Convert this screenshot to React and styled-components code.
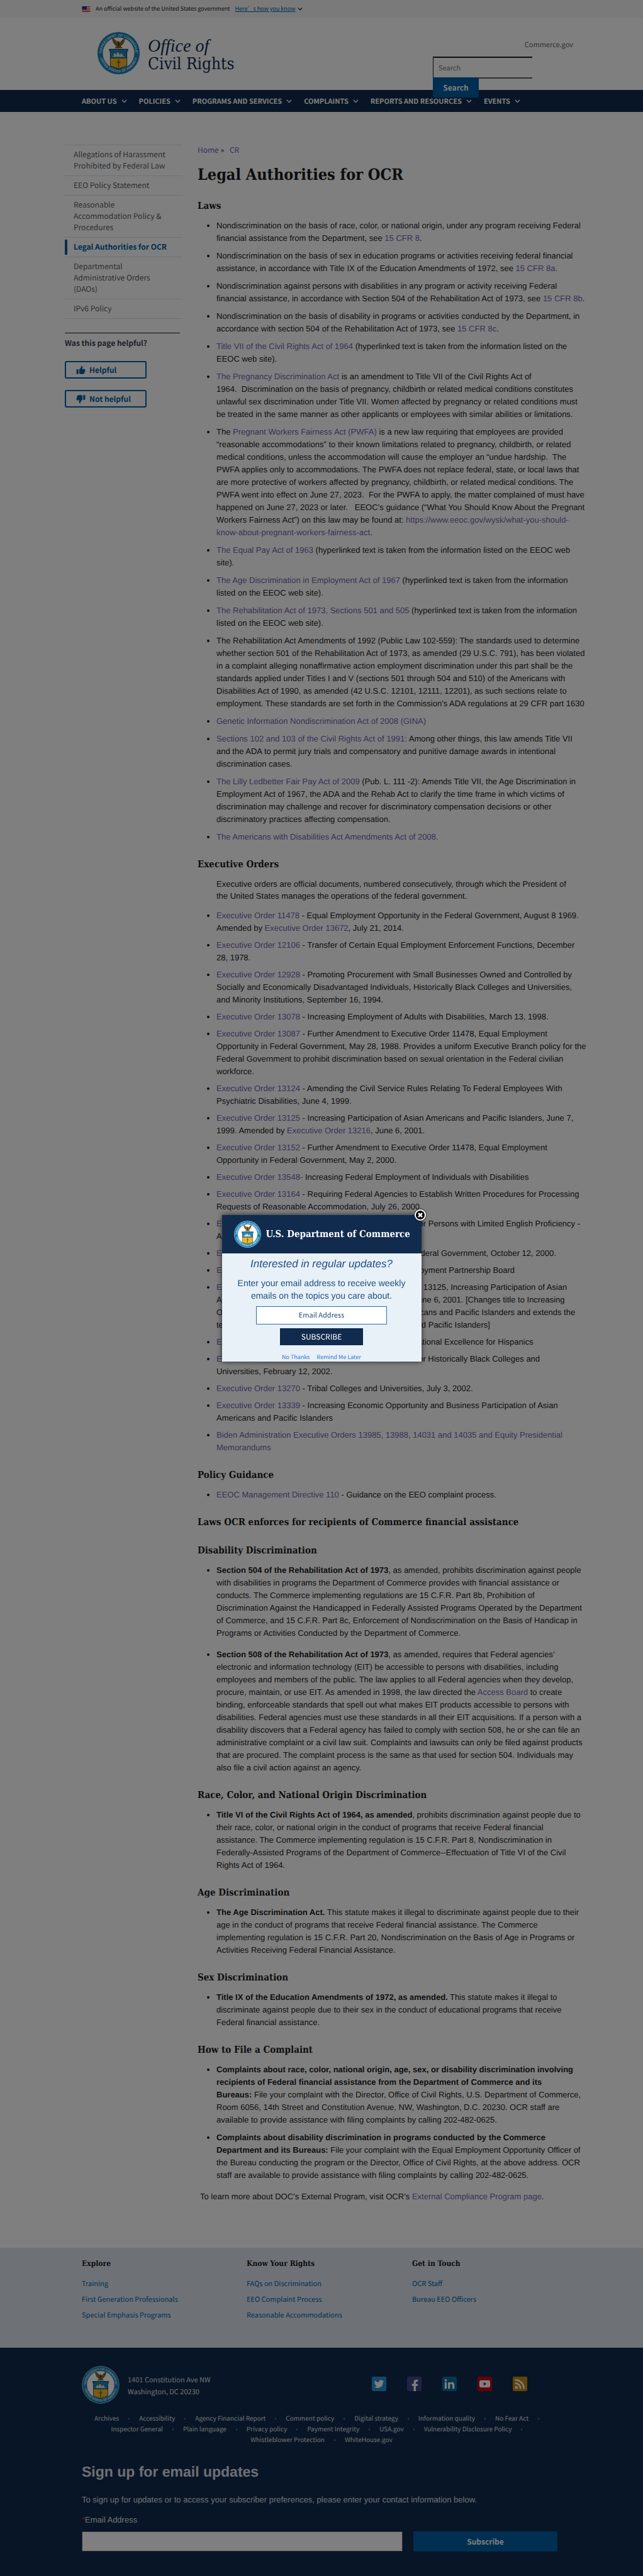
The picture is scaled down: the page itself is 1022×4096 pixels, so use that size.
import React from "react";
import styled, { createGlobalStyle, css } from "styled-components";

const sans = `"Noto Sans CJK SC", "Noto Sans", sans-serif`;
const serif = `"DejaVu Serif Condensed", "DejaVu Serif", serif`;
const body = `"Liberation Sans", Arial, sans-serif`;

const Global = createGlobalStyle`
  *, *::before, *::after { box-sizing: border-box; }
  body {
    margin: 0;
    background: #fff;
    color: #1b1b1b;
    font: 13px/20px ${body};
    text-rendering: geometricPrecision;
  }
  a { color: #7562ae; text-decoration: none; }
  button, input { font-family: ${sans}; margin: 0; text-rendering: inherit; }
`;

const wrap = css`
  width: 100%;
  max-width: 762px;
  margin: 0 auto;
`;

/* ---------- banner ---------- */
const Banner = styled.div`
  background: #f5f5f5;
`;
const BannerInner = styled.div`
  ${wrap}
  height: 28px;
  display: flex;
  align-items: center;
  font: 9px/14px ${sans};
  svg { display: block; }
`;
const Flag = styled.svg`
  width: 14px;
  height: 9px;
  margin-right: 8px;
`;
const KnowLink = styled.a`
  display: flex;
  align-items: center;
  gap: 4px;
  margin-left: 8px;
  color: #005ea2;
  span { text-decoration: underline; }
  svg { color: #1b1b1b; }
`;

/* ---------- header ---------- */
const Header = styled.header`
  max-width: 822px;
  height: 115px;
  margin: 0 auto;
  padding: 0 11px 0 54px;
  display: flex;
  justify-content: space-between;
  align-items: flex-start;
`;
const Brand = styled.a`
  display: flex;
  gap: 12px;
  margin-top: 22px;
  color: #112b4e;
`;
const BrandName = styled.span`
  display: block;
  padding-top: 9px;
  font: 26px/29px ${serif};
  em { display: block; font: italic 28px/29px "Liberation Serif", serif; }
`;
const HeaderTools = styled.div`
  width: 223px;
  padding-top: 34px;
`;
const SiteLink = styled.a`
  display: block;
  text-align: right;
  font: 11px/18px ${sans};
  color: #5b616b;
`;
const SearchForm = styled.form`
  width: 158px;
  margin-top: 10px;
`;
const SearchInput = styled.input`
  display: block;
  width: 100%;
  height: 35px;
  padding: 0 8px;
  border: solid #1b1b1b;
  border-width: 2px 0 2px 1px;
  border-bottom-color: #565c65;
  border-radius: 0;
  background: #fff;
  font-size: 11px;
  &::placeholder { color: #757575; opacity: 1; }
`;
const SearchButton = styled.button`
  position: relative;
  z-index: 1;
  width: 73px;
  height: 32px;
  margin-top: -2px;
  border: 0;
  border-radius: 0 3px 3px 3px;
  background: #005ea2;
  color: #fff;
  font-size: 12px;
  font-weight: 700;
`;

/* ---------- navigation ---------- */
const NavBar = styled.nav`
  background: #112b4e;
`;
const NavList = styled.ul`
  ${wrap}
  height: 35px;
  padding: 0;
  list-style: none;
  display: flex;
  align-items: center;
  gap: 19px;
`;
const NavButton = styled.button`
  display: flex;
  align-items: center;
  gap: 7px;
  padding: 0;
  border: 0;
  background: none;
  color: #fff;
  font-size: 11px;
  font-weight: 700;
  line-height: 18px;
  text-transform: uppercase;
  white-space: nowrap;
`;

/* ---------- page columns ---------- */
const Columns = styled.div`
  max-width: 842px;
  margin: 0 auto;
  padding: 52px 0 71px 13px;
  display: grid;
  grid-template-columns: 187px minmax(0, 1fr);
  gap: 24px;
`;
const SideList = styled.ul`
  margin: 0;
  padding: 0;
  list-style: none;
  border-bottom: 1px solid #dfe1e2;
`;
const SideItem = styled.li`
  border-top: 1px solid #dfe1e2;
  padding: 3px 0;
`;
const SideLink = styled.a`
  display: block;
  padding: 3px 16px 3px 10px;
  border-left: 4px solid ${(p) => (p.$active ? "#005ea2" : "transparent")};
  color: ${(p) => (p.$active ? "#005ea2" : "#565c65")};
  font: ${(p) => (p.$active ? 700 : 400)} 12px/18px ${sans};
`;
const Feedback = styled.section`
  width: 183px;
  margin-top: 22px;
  border-top: 1px solid #1b1b1b;
  padding-top: 6px;
  display: flex;
  flex-direction: column;
  align-items: flex-start;
`;
const FeedbackTitle = styled.h2`
  margin: 0 0 19px;
  font: 700 12px/19px ${sans};
  color: #3d4551;
`;
const FeedbackButton = styled.button`
  width: 130px;
  height: 28px;
  margin-bottom: 18px;
  padding: 0 16px;
  display: flex;
  align-items: center;
  gap: 6px;
  border: 2px solid #005ea2;
  border-radius: 3px;
  background: none;
  color: #005ea2;
  font-size: 12px;
  font-weight: 700;
  white-space: nowrap;
`;

/* ---------- article ---------- */
const Crumbs = styled.nav`
  font: 12px/18px ${sans};
  a:last-child { margin-left: 6px; }
`;
const Title = styled.h1`
  margin: 14px 0 18px;
  font: 700 25px/32px ${serif};
`;
const Heading = styled.h2`
  margin: 21px 0 10px;
  font: 700 15px/24px ${serif};
`;
const List = styled.ul`
  margin: 0;
  padding: 0 0 0 30px;
  > li { margin-bottom: ${(p) => (p.$tight ? 7 : 8)}px; }
`;
const Item = styled.li`
  && { ${(p) => p.$wide && "margin-bottom: 14px;"} }
`;
const Lead = styled.p`
  margin: 0 30px 12px 30px;
  line-height: 19px;
`;
const Closing = styled.p`
  margin: 14px 0 0 4px;
`;

/* ---------- footers ---------- */
const LinksFooter = styled.div`
  background: #dce4ef;
`;
const LinkColumns = styled.div`
  ${wrap}
  height: 159px;
  padding-top: 15px;
  display: grid;
  grid-template-columns: 262px 263px 1fr;
`;
const FooterHeading = styled.h3`
  margin: 0 0 10px;
  font: 700 12px/20px ${serif};
`;
const FooterList = styled.ul`
  margin: 0;
  padding: 0;
  list-style: none;
  font: 11px/25px ${sans};
  a { color: #005ea2; }
`;
const Footer = styled.footer`
  background: #112b4e;
  color: #fff;
  padding: 29px 0 41px;
`;
const FooterInner = styled.div`
  ${wrap}
`;
const AddressRow = styled.div`
  display: flex;
  align-items: center;
  justify-content: space-between;
`;
const Contact = styled.div`
  display: flex;
  align-items: center;
  gap: 13px;
`;
const Address = styled.address`
  font: 11px/19px ${sans};
  color: #dfe1e2;
  padding-top: 3px;
`;
const Social = styled.div`
  display: flex;
  gap: 33px;
  margin: 0 54px 4px 0;
  svg { display: block; }
`;
const LegalLinks = styled.ul`
  list-style: none;
  margin: 14px 0 0;
  padding: 0;
  display: flex;
  flex-wrap: wrap;
  justify-content: center;
  font: 10px/17px ${sans};
  li { display: flex; align-items: center; }
  a { color: #dfe1e2; }
  li:not(:last-child)::after {
    content: "";
    width: 2px;
    height: 2px;
    margin: 2px 15px 0;
    border-radius: 50%;
    background: #8aa0bd;
  }
`;
const SignupTitle = styled.h2`
  margin: 29px 0 21px;
  font: 700 23px/28px ${body};
  color: #dfe1e2;
`;
const SignupText = styled.p`
  margin: 0 0 12px;
  color: #dfe1e2;
`;
const SignupLabel = styled.label`
  display: block;
  margin-bottom: 8px;
  color: #dfe1e2;
  span { color: #e31c3d; }
`;
const SignupRow = styled.div`
  display: grid;
  grid-template-columns: minmax(0, 510px) 229px;
  gap: 17px;
`;
const SignupInput = styled.input`
  height: 32px;
  border: 1px solid #565c65;
  background: #fff;
`;
const SignupButton = styled.button`
  height: 32px;
  border: 0;
  border-radius: 2px;
  background: #005ea2;
  color: #fff;
  font-size: 12px;
  font-weight: 700;
`;

/* ---------- subscription dialog ---------- */
const Overlay = styled.div`
  position: fixed;
  inset: 0;
  z-index: 10;
  display: flex;
  align-items: center;
  justify-content: center;
  background: rgba(0, 0, 0, 0.5);
`;
const Dialog = styled.section`
  position: relative;
  width: 317px;
  height: 233px;
  background: #e8f0f8;
  box-shadow: 0 0 8px rgba(0, 0, 0, 0.7);
  color: #205081;
`;
const DialogHead = styled.header`
  height: 61px;
  padding-left: 19px;
  display: flex;
  align-items: center;
  gap: 8px;
  background: #112b4e;
  color: #fff;
  font: 700 15px/24px ${serif};
  white-space: nowrap;
`;
const DialogBody = styled.form`
  height: 172px;
  padding-top: 6px;
  display: flex;
  flex-direction: column;
  align-items: center;
  text-align: center;
`;
const DialogTitle = styled.h2`
  margin: 0 0 9px;
  font: italic 400 17px/22px ${body};
`;
const DialogText = styled.p`
  width: 270px;
  margin: 0 0 7px;
  font-size: 14px;
`;
const DialogInput = styled.input`
  width: 208px;
  height: 29px;
  flex: none;
  border: 1px solid #2672b5;
  background: #fff;
  text-align: center;
  font-size: 11px;
  &::placeholder { color: #1a4778; opacity: 1; }
`;
const DialogSubmit = styled.button`
  width: 132px;
  height: 27px;
  flex: none;
  margin: 6px 0 12px;
  border: 0;
  background: #112b4e;
  color: #fff;
  font-size: 12px;
`;
const DialogLinks = styled.div`
  display: flex;
  gap: 11px;
  font: 9px/14px ${sans};
  a { color: #2a76c0; }
`;
const Close = styled.button`
  position: absolute;
  top: -9px;
  right: -7px;
  width: 18px;
  height: 18px;
  padding: 0;
  display: flex;
  align-items: center;
  justify-content: center;
  border: 2px solid #fff;
  border-radius: 50%;
  background: #000;
  color: #fff;
  box-shadow: 0 0 3px #000;
`;

/* ---------- drawings ---------- */
const Chevron = ({ size = 9 }) => (
  <svg width={size} height={size} viewBox="0 0 10 10" fill="none" stroke="currentColor" strokeWidth="1.5" aria-hidden="true">
    <path d="M1 3l4 4.4L9 3" />
  </svg>
);

const Seal = ({ size, id }) => (
  <svg width={size} height={size} viewBox="0 0 100 100" role="img" aria-label="Department of Commerce seal">
    <defs>
      <path id={`${id}-top`} d="M11.5 50a38.5 38.5 0 0 1 77 0" />
      <path id={`${id}-bottom`} d="M6 50a44 44 0 0 0 88 0" />
    </defs>
    <circle cx="50" cy="50" r="49.5" fill="#cfe6f2" />
    <circle cx="50" cy="50" r="48.5" fill="#1a80b4" />
    <circle cx="50" cy="50" r="37" fill="#fff" stroke="#124f78" strokeWidth="1" />
    <g fill="#d6ecf7" fontFamily="Liberation Sans, sans-serif" fontSize="8" fontWeight="700">
      <text textAnchor="middle"><textPath href={`#${id}-top`} startOffset="50%">DEPARTMENT OF COMMERCE</textPath></text>
      <text textAnchor="middle"><textPath href={`#${id}-bottom`} startOffset="50%">UNITED STATES OF AMERICA</textPath></text>
      <circle cx="6.500" cy="50" r="1.200" />
      <circle cx="93.500" cy="50" r="1.200" />
    </g>
    <path d="M36 16c0 7 4 15 10 18l-4 4h16l-4-4c6-3 10-11 10-18-5 3-9 7-11 12 0-4-2-6-4-5-1-1-3 1-2 3-2-4-6-8-11-10z" fill="#8a6a1f" stroke="#4a3610" strokeWidth="1" />
    <path d="M49 24l3 6-2 6-2-6z" fill="#3d2c0c" />
    <path d="M29 41h42v4h-2v34c0 3-14 4-19 9-5-5-19-6-19-9V45h-2z" fill="#1b86b8" stroke="#12324a" strokeWidth="1.500" />
    <path d="M31.500 61h37v17c-2 3-13 4-18.500 8-5.500-4-16.500-5-18.500-8z" fill="#f2b722" />
    <path d="M31 61h38" stroke="#12324a" strokeWidth="1.500" />
    <path d="M38 58c-1-5 1-8 5-9l1 5 2-7c5 1 7 4 7 8l2-6c4 2 6 5 6 9z" fill="#dfe9ee" stroke="#26485c" strokeWidth=".8" />
    <path d="M36 58h28" stroke="#e8f1f5" strokeWidth="1.500" />
    <path d="M49 64h2v20h-2zM46 70h8v2h-8z" fill="#6b5210" />
  </svg>
);

const UsFlag = () => (
  <Flag viewBox="0 0 16 11" aria-hidden="true">
    <path fill="#fff" d="M0 0h16v11H0z" />
    <path fill="#db3e1f" d="M0 0h16v1.500H0zM0 3h16v1.500H0zM0 6h16v1.500H0zM0 9h16v2H0z" />
    <path fill="#1e33b1" d="M0 0h9v6H0z" />
  </Flag>
);

const ThumbUp = ({ flip }) => (
  <svg width="15" height="15" viewBox="0 0 24 24" fill="currentColor" aria-hidden="true">
    <path
      transform={flip ? "rotate(180 12 12)" : undefined}
      d="M1 10h5v12H1zM8 10c3-2 5-5 5-9 3 0 4 2 3.500 4.500L15.500 9H21c2 0 2.500 2 1.500 3 1 1 .8 2.500-.5 3 .8 1 .5 2.500-.7 3 .5 1.500-.3 2.500-1.300 2.500C20 22 19 22 18 22h-5c-2 0-3-1-5-1z"
    />
  </svg>
);

const socials = [
  ["Twitter", "#2a8fd0", <path fill="#fff" d="M20 7.300c-.6.300-1.200.4-1.900.5.700-.4 1.200-1 1.400-1.800-.6.400-1.300.6-2.100.8A3.300 3.300 0 0 0 11.700 9.800 9.400 9.400 0 0 1 5 6.300c-.9 1.500-.4 3.400 1 4.400-.5 0-1-.2-1.500-.4 0 1.600 1.100 2.900 2.600 3.200-.5.100-1 .1-1.500 0 .4 1.300 1.600 2.300 3.100 2.300A6.600 6.600 0 0 1 4 17.200 9.300 9.300 0 0 0 18.400 9c.6-.5 1.200-1 1.600-1.700z" />],
  ["Facebook", "#3c4a86", <path fill="#fff" d="M16.500 24v-8.500h3l.5-3.400h-3.500V10c0-1 .4-1.700 1.800-1.700H20V5.200C19.600 5.100 18.600 5 17.500 5 14.800 5 13 6.600 13 9.500v2.600h-3v3.400h3V24z" transform="translate(-2 0)" />],
  ["LinkedIn", "#0e6a98", <path fill="#fff" d="M4 9.500h3.300V20H4zM5.700 4.300a1.900 1.900 0 1 1 0 3.800 1.900 1.900 0 0 1 0-3.800zM9.500 9.500h3.100V11c.5-.9 1.600-1.800 3.300-1.800 3.400 0 4.100 2.200 4.100 5.100V20h-3.300v-5.100c0-1.200 0-2.800-1.700-2.800s-2.100 1.300-2.100 2.700V20H9.500z" />],
  ["YouTube", "#c4060f", <path fill="#fff" fillRule="evenodd" d="M6 6h12c2.500 0 3 1.500 3 6s-.5 6-3 6H6c-2.500 0-3-1.500-3-6s.5-6 3-6zm4 3v6l5-3z" />],
  ["RSS", "#c48610", <g fill="none" stroke="#fff" strokeWidth="2.600"><path d="M4 5.500A14.500 14.500 0 0 1 18.500 20M4 11a9 9 0 0 1 9 9" /><circle cx="6" cy="18" r="1" /></g>],
];

/* ---------- content ---------- */
const A = ({ children }) => <a href="#link">{children}</a>;
const EO = ({ n }) => <A>Executive Order {n}</A>;
const nb = "\u00a0";

const navItems = ["About Us", "Policies", "Programs and Services", "Complaints", "Reports and Resources", "Events"];
const sideItems = [
  "Allegations of Harassment Prohibited by Federal Law",
  "EEO Policy Statement",
  "Reasonable Accommodation Policy & Procedures",
  "Legal Authorities for OCR",
  "Departmental Administrative Orders (DAOs)",
  "IPv6 Policy",
];
const footerColumns = [
  ["Explore", ["Training", "First Generation Professionals", "Special Emphasis Programs"]],
  ["Know Your Rights", ["FAQs on Discrimination", "EEO Complaint Process", "Reasonable Accommodations"]],
  ["Get in Touch", ["OCR Staff", "Bureau EEO Officers"]],
];
const legal = [
  "Archives", "Accessibility", "Agency Financial Report", "Comment policy", "Digital strategy", "Information quality",
  "No Fear Act", "Inspector General", "Plain language", "Privacy policy", "Payment Integrity", "USA.gov",
  "Vulnerability Disclosure Policy", "Whistleblower Protection", "WhiteHouse.gov",
];

const Article = () => (
  <main>
    <Crumbs aria-label="Breadcrumb"><A>Home</A> » <A>CR</A></Crumbs>
    <Title>Legal Authorities for OCR</Title>

    <Heading>Laws</Heading>
    <List>
      <Item>Nondiscrimination on the basis of race, color, or national origin, under any program receiving Federal financial assistance from the Department, see <A>15 CFR 8</A>.</Item>
      <Item>Nondiscrimination on the basis of sex in education programs or activities receiving federal financial assistance, in accordance with Title IX of the Education Amendments of 1972, see <A>15 CFR 8a.</A></Item>
      <Item>Nondiscrimination against persons with disabilities in any program or activity receiving Federal financial assistance, in accordance with Section 504 of the Rehabilitation Act of 1973, see <A>15 CFR 8b</A>.</Item>
      <Item>Nondiscrimination on the basis of disability in programs or activities conducted by the Department, in accordance with section 504 of the Rehabilitation Act of 1973, see <A>15 CFR 8c</A>.</Item>
      <Item><A>Title VII of the Civil Rights Act of 1964</A> (hyperlinked text is taken from the information listed on the EEOC web site).</Item>
      <Item><A>The Pregnancy Discrimination Act</A> is an amendment to Title VII of the Civil Rights Act of 1964.{nb}{nb}Discrimination on the basis of pregnancy, childbirth or related medical conditions constitutes unlawful sex discrimination under Title VII. Women affected by pregnancy or related conditions must be treated in the same manner as other applicants or employees with similar abilities or limitations.</Item>
      <Item>The <A>Pregnant Workers Fairness Act (PWFA)</A> is a new law requiring that employees are provided “reasonable accommodations” to their known limitations related to pregnancy, childbirth, or related medical conditions, unless the accommodation will cause the employer an “undue hardship.{nb} The PWFA applies only to accommodations. The PWFA does not replace federal, state, or local laws that are more protective of workers affected by pregnancy, childbirth, or related medical conditions. The PWFA went into effect on June 27, 2023.{nb} For the PWFA to apply, the matter complained of must have happened on June 27, 2023 or later.{nb}{nb} EEOC’s guidance (“What You Should Know About the Pregnant Workers Fairness Act”) on this law may be found at: <A>https://www.eeoc.gov/wysk/what-you-should-know-about-pregnant-workers-fairness-act</A>.</Item>
      <Item><A>The Equal Pay Act of 1963</A> (hyperlinked text is taken from the information listed on the EEOC web site).</Item>
      <Item><A>The Age Discrimination in Employment Act of 1967</A> (hyperlinked text is taken from the information listed on the EEOC web site).</Item>
      <Item><A>The Rehabilitation Act of 1973, Sections 501 and 505</A> (hyperlinked text is taken from the information listed on the EEOC web site).</Item>
      <Item>The Rehabilitation Act Amendments of 1992 (Public Law 102-559): The standards used to determine whether section 501 of the Rehabilitation Act of 1973, as amended (29 U.S.C. 791), has been violated in a complaint alleging nonaffirmative action employment discrimination under this part shall be the standards applied under Titles I and V (sections 501 through 504 and 510) of the Americans with Disabilities Act of 1990, as amended (42 U.S.C. 12101, 12111, 12201), as such sections relate to employment. These standards are set forth in the Commission's ADA regulations at 29 CFR part 1630</Item>
      <Item><A>Genetic Information Nondiscrimination Act of 2008 (GINA)</A></Item>
      <Item><A>Sections 102 and 103 of the Civil Rights Act of 1991:</A> Among other things, this law amends Title VII and the ADA to permit jury trials and compensatory and punitive damage awards in intentional discrimination cases.</Item>
      <Item><A>The Lilly Ledbetter Fair Pay Act of 2009</A> (Pub. L. 111 -2): Amends Title VII, the Age Discrimination in Employment Act of 1967, the ADA and the Rehab Act to clarify the time frame in which victims of discrimination may challenge and recover for discriminatory compensation decisions or other discriminatory practices affecting compensation.</Item>
      <Item><A>The Americans with Disabilities Act Amendments Act of 2008.</A></Item>
    </List>

    <Heading>Executive Orders</Heading>
    <Lead>Executive orders are official documents, numbered consecutively, through which the President of the United States manages the operations of the federal government.</Lead>
    <List $tight>
      <Item><EO n="11478" /> - Equal Employment Opportunity in the Federal Government, August 8 1969. Amended by <EO n="13672" />, July 21, 2014.</Item>
      <Item><EO n="12106" /> - Transfer of Certain Equal Employment Enforcement Functions, December 28, 1978.</Item>
      <Item><EO n="12928" /> - Promoting Procurement with Small Businesses Owned and Controlled by Socially and Economically Disadvantaged Individuals, Historically Black Colleges and Universities, and Minority Institutions, September 16, 1994.</Item>
      <Item><EO n="13078" /> - Increasing Employment of Adults with Disabilities, March 13, 1998.</Item>
      <Item><EO n="13087" /> - Further Amendment to Executive Order 11478, Equal Employment Opportunity in Federal Government, May 28, 1988. Provides a uniform Executive Branch policy for the Federal Government to prohibit discrimination based on sexual orientation in the Federal civilian workforce.</Item>
      <Item><EO n="13124" /> - Amending the Civil Service Rules Relating To Federal Employees With Psychiatric Disabilities, June 4, 1999.</Item>
      <Item><EO n="13125" /> - Increasing Participation of Asian Americans and Pacific Islanders, June 7, 1999. Amended by <EO n="13216" />, June 6, 2001.</Item>
      <Item><EO n="13152" /> - Further Amendment to Executive Order 11478, Equal Employment Opportunity in Federal Government, May 2, 2000.</Item>
      <Item><A>Executive Order 13548-</A> Increasing Federal Employment of Individuals with Disabilities</Item>
      <Item><EO n="13164" /> - Requiring Federal Agencies to Establish Written Procedures for Processing Requests of Reasonable Accommodation, July 26, 2000.</Item>
      <Item><EO n="13166" /> - Improving Access to Services for Persons with Limited English Proficiency - August 11, 2000.</Item>
      <Item><EO n="13171" /> - Hispanic Employment in the Federal Government, October 12, 2000.</Item>
      <Item><EO n="13187" /> - The President's Disability Employment Partnership Board</Item>
      <Item><EO n="13216" /> - Amendment to Executive Order 13125, Increasing Participation of Asian Americans and Pacific Islanders in Federal Programs, June 6, 2001. [Changes title to Increasing Opportunity and Improving Quality of Life of Asian Americans and Pacific Islanders and extends the term of the Advisory Commission on Asian Americans and Pacific Islanders]</Item>
      <Item><EO n="13230" /> - Advisory Commission on Educational Excellence for Hispanics</Item>
      <Item><EO n="13256" /> - President's Board of Advisors for Historically Black Colleges and Universities,{nb}February 12, 2002.</Item>
      <Item><EO n="13270" /> - Tribal Colleges and Universities, July 3, 2002.</Item>
      <Item><EO n="13339" /> - Increasing Economic Opportunity and Business Participation of Asian Americans and Pacific Islanders</Item>
      <Item><A>Biden Administration Executive Orders 13985, 13988, 14031 and 14035 and Equity Presidential Memorandums</A></Item>
    </List>

    <Heading>Policy Guidance</Heading>
    <List>
      <Item><A>EEOC Management Directive 110</A> - Guidance on the EEO complaint process.</Item>
    </List>

    <Heading>Laws OCR enforces for recipients of Commerce financial assistance</Heading>
    <Heading>Disability Discrimination</Heading>
    <List>
      <Item $wide><b>Section 504 of the Rehabilitation Act of 1973</b>, as amended, prohibits discrimination against people with disabilities in programs the Department of Commerce provides with financial assistance or conducts. The Commerce implementing regulations are 15 C.F.R. Part 8b, Prohibition of Discrimination Against the Handicapped in Federally Assisted Programs Operated by the Department of Commerce, and 15 C.F.R. Part 8c, Enforcement of Nondiscrimination on the Basis of Handicap in Programs or Activities Conducted by the Department of Commerce.</Item>
      <Item><b>Section 508 of the Rehabilitation Act of 1973</b>, as amended, requires that Federal agencies’ electronic and information technology (EIT) be accessible to persons with disabilities, including employees and members of the public. The law applies to all Federal agencies when they develop, procure, maintain, or use EIT. As amended in 1998, the law directed the <A>Access Board</A> to create binding, enforceable standards that spell out what makes EIT products accessible to persons with disabilities. Federal agencies must use these standards in all their EIT acquisitions. If a person with a disability discovers that a Federal agency has failed to comply with section 508, he or she can file an administrative complaint or a civil law suit. Complaints and lawsuits can only be filed against products that are procured. The complaint process is the same as that used for section 504. Individuals may also file a civil action against an agency.</Item>
    </List>

    <Heading>Race, Color, and National Origin Discrimination</Heading>
    <List>
      <Item><b>Title VI of the Civil Rights Act of 1964, as amended</b>, prohibits discrimination against people due to their race, color, or national origin in the conduct of programs that receive Federal financial assistance. The Commerce implementing regulation is 15 C.F.R. Part 8, Nondiscrimination in Federally-Assisted Programs of the Department of Commerce--Effectuation of Title VI of the Civil Rights Act of 1964.</Item>
    </List>

    <Heading>Age Discrimination</Heading>
    <List>
      <Item><b>The Age Discrimination Act.</b> This statute makes it illegal to discriminate against people due to their age in the conduct of programs that receive Federal financial assistance. The Commerce implementing regulation is 15 C.F.R. Part 20, Nondiscrimination on the Basis of Age in Programs or Activities Receiving Federal Financial Assistance.</Item>
    </List>

    <Heading>Sex Discrimination</Heading>
    <List>
      <Item><b>Title IX of the Education Amendments of 1972, as amended.</b> This statute makes it illegal to discriminate against people due to their sex in the conduct of educational programs that receive Federal financial assistance.</Item>
    </List>

    <Heading>How to File a Complaint</Heading>
    <List>
      <Item><b>Complaints about race, color, national origin, age, sex, or disability discrimination involving recipients of Federal financial assistance from the Department of Commerce and its Bureaus:</b>{nb}File your complaint with the Director, Office of Civil Rights, U.S. Department of Commerce, Room 6056, 14th Street and Constitution Avenue, NW, Washington, D.C. 20230. OCR staff are available to provide assistance with filing complaints by calling 202-482-0625.</Item>
      <Item><b>Complaints about disability discrimination in programs conducted by the Commerce Department and its Bureaus:</b> File your complaint with the Equal Employment Opportunity Officer of the Bureau conducting the program or the Director, Office of Civil Rights, at the above address. OCR staff are available to provide assistance with filing complaints by calling 202-482-0625.</Item>
    </List>
    <Closing>To learn more about DOC’s External Program, visit OCR’s <A>External Compliance Program page</A>.</Closing>
  </main>
);

export default function App() {
  return (
    <>
      <Global />
      <Banner>
        <BannerInner>
          <UsFlag />
          An official website of the United States government
          <KnowLink href="#know"><span>Here’s how you know</span><Chevron size={8} /></KnowLink>
        </BannerInner>
      </Banner>
      <Header>
        <Brand href="#home">
          <Seal size={69} id="seal-header" />
          <BrandName><em>Office of</em>Civil Rights</BrandName>
        </Brand>
        <HeaderTools>
          <SiteLink href="#commerce">Commerce.gov</SiteLink>
          <SearchForm role="search">
            <SearchInput type="search" placeholder="Search" aria-label="Search" />
            <SearchButton type="button">Search</SearchButton>
          </SearchForm>
        </HeaderTools>
      </Header>
      <NavBar aria-label="Primary">
        <NavList>
          {navItems.map((t) => (
            <li key={t}><NavButton type="button">{t}<Chevron /></NavButton></li>
          ))}
        </NavList>
      </NavBar>
      <Columns>
        <aside>
          <SideList>
            {sideItems.map((t, i) => (
              <SideItem key={t}><SideLink href="#side" $active={i === 3}>{t}</SideLink></SideItem>
            ))}
          </SideList>
          <Feedback>
            <FeedbackTitle>Was this page helpful?</FeedbackTitle>
            <FeedbackButton type="button"><ThumbUp />Helpful</FeedbackButton>
            <FeedbackButton type="button"><ThumbUp flip />Not helpful</FeedbackButton>
          </Feedback>
        </aside>
        <Article />
      </Columns>
      <LinksFooter>
        <LinkColumns>
          {footerColumns.map(([title, links]) => (
            <div key={title}>
              <FooterHeading>{title}</FooterHeading>
              <FooterList>{links.map((l) => <li key={l}><A>{l}</A></li>)}</FooterList>
            </div>
          ))}
        </LinkColumns>
      </LinksFooter>
      <Footer>
        <FooterInner>
          <AddressRow>
            <Contact>
              <Seal size={60} id="seal-footer" />
              <Address>1401 Constitution Ave NW<br />Washington, DC 20230</Address>
            </Contact>
            <Social>
              {socials.map(([name, color, glyph]) => (
                <a key={name} href="#social" aria-label={name}>
                  <svg width="23" height="23" viewBox="0 0 24 24"><rect width="24" height="24" rx="2" fill={color} />{glyph}</svg>
                </a>
              ))}
            </Social>
          </AddressRow>
          <LegalLinks>{legal.map((l) => <li key={l}><A>{l}</A></li>)}</LegalLinks>
          <SignupTitle>Sign up for email updates</SignupTitle>
          <SignupText>To sign up for updates or to access your subscriber preferences, please enter your contact information below.</SignupText>
          <SignupLabel htmlFor="signup-email"><span>*</span>Email Address</SignupLabel>
          <SignupRow>
            <SignupInput id="signup-email" type="email" />
            <SignupButton type="button">Subscribe</SignupButton>
          </SignupRow>
        </FooterInner>
      </Footer>
      <Overlay>
        <Dialog role="dialog" aria-label="Email updates">
          <DialogHead><Seal size={43} id="seal-dialog" />U.S. Department of Commerce</DialogHead>
          <DialogBody>
            <DialogTitle>Interested in regular updates?</DialogTitle>
            <DialogText>Enter your email address to receive weekly emails on the topics you care about.</DialogText>
            <DialogInput type="email" placeholder="Email Address" aria-label="Email Address" />
            <DialogSubmit type="button">SUBSCRIBE</DialogSubmit>
            <DialogLinks><A>No Thanks</A><A>Remind Me Later</A></DialogLinks>
          </DialogBody>
          <Close type="button" aria-label="Close">
            <svg width="10" height="10" viewBox="0 0 10 10" stroke="currentColor" strokeWidth="2.500"><path d="M2 2l6 6M8 2L2 8" /></svg>
          </Close>
        </Dialog>
      </Overlay>
    </>
  );
}
